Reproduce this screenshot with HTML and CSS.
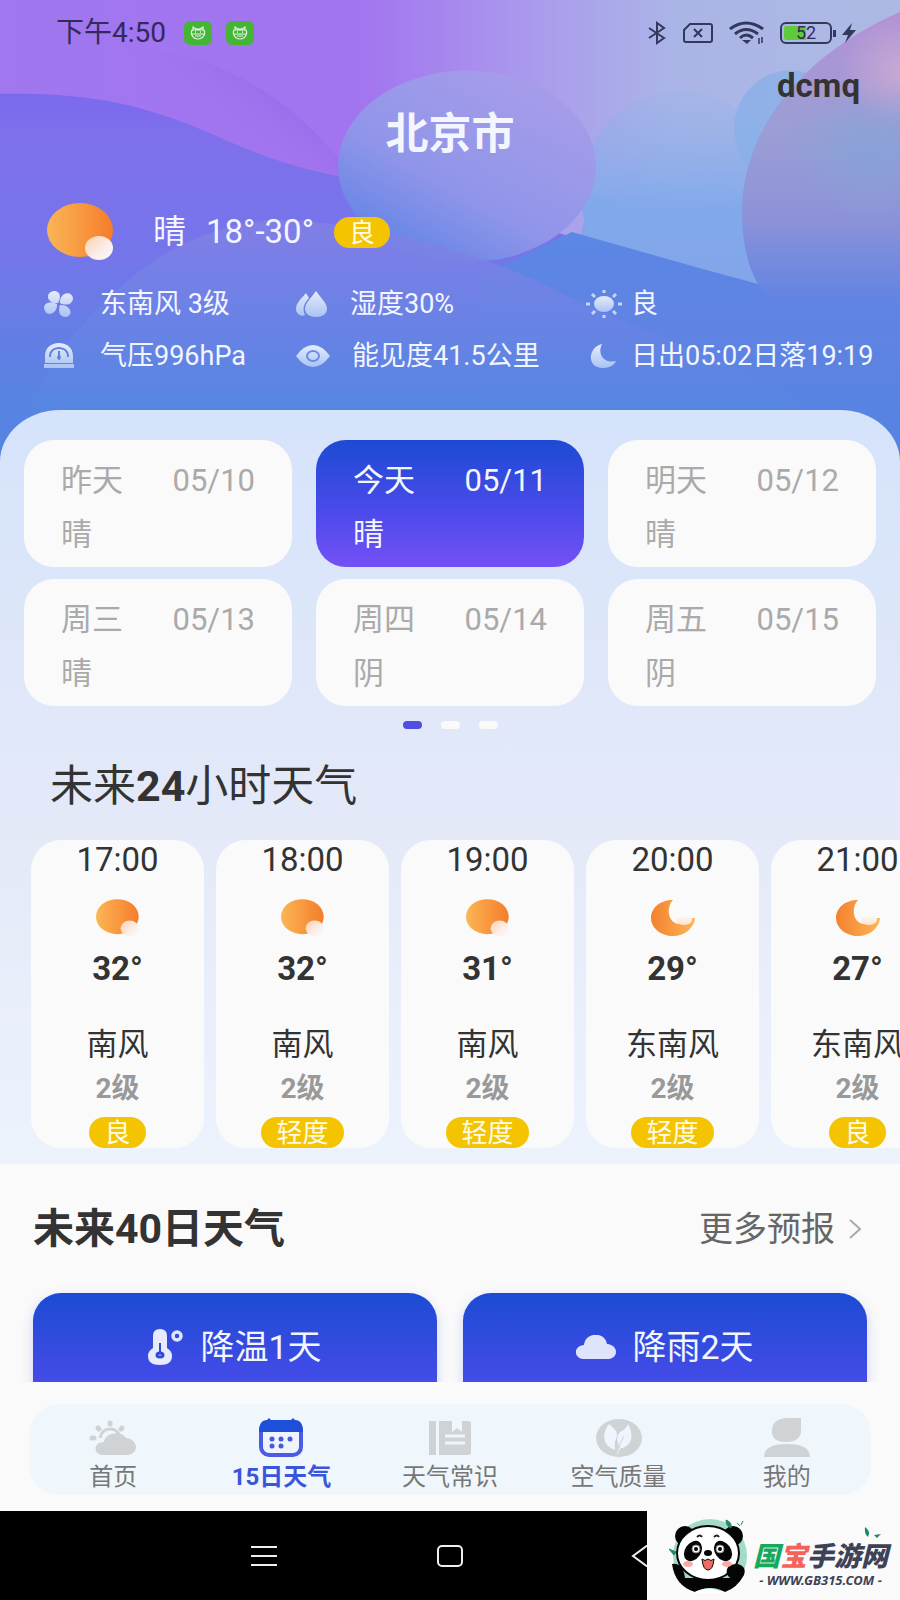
FILE: index.html
```html
<!DOCTYPE html>
<html lang="zh">
<head>
    <meta charset="UTF-8">
    <meta name="viewport" content="width=device-width, initial-scale=1.0">
    <title>15日天气</title>
    <link rel="stylesheet" href="styles.css">
</head>
<body>
    <!-- 公共图标 -->
    <svg class="defs" aria-hidden="true">
        <defs>
            <linearGradient id="gSun" x1="0" y1="0" x2="1" y2="0">
                <stop offset="0" stop-color="#fbb655"/>
                <stop offset="1" stop-color="#f57c2b"/>
            </linearGradient>
            <linearGradient id="gMoon" x1="0" y1="0" x2="1" y2="0">
                <stop offset="0" stop-color="#f5812f"/>
                <stop offset="1" stop-color="#fbb655"/>
            </linearGradient>
            <linearGradient id="gBall" x1="0" y1="0" x2="1" y2="1">
                <stop offset="0" stop-color="#fdcfae"/>
                <stop offset="0.6" stop-color="#fbeeea"/>
                <stop offset="1" stop-color="#fafafa"/>
            </linearGradient>
            <linearGradient id="gHaze" x1="0" y1="0" x2="0" y2="1">
                <stop offset="0" stop-color="#fafafa"/>
                <stop offset="1" stop-color="#fde3cd"/>
            </linearGradient>
            <linearGradient id="gIcon" x1="0" y1="0" x2="0" y2="1">
                <stop offset="0" stop-color="#e6ecfd"/>
                <stop offset="1" stop-color="#a9c3f3"/>
            </linearGradient>
        </defs>
        <symbol id="sun" viewBox="0 0 68 58">
            <ellipse cx="33" cy="27" rx="33" ry="27" fill="url(#gSun)"/>
            <ellipse cx="52" cy="45" rx="14" ry="12" fill="url(#gBall)"/>
        </symbol>
        <symbol id="moon" viewBox="0 0 44 38">
            <path d="M22 1C9 1 0 9 0 19c0 10 10 18 22 18 12 0 21-8 22-18-4 0-5 1-6 3-3 4-9 4-14 2-8-4-8-17-2-23z" fill="url(#gMoon)"/>
            <ellipse cx="33" cy="21" rx="8" ry="5" fill="url(#gHaze)"/>
        </symbol>
        <symbol id="cat" viewBox="0 0 28 24">
            <rect width="28" height="24" rx="6" fill="#45b535"/>
            <g fill="none" stroke="#eaf7e6" stroke-width="1.1">
                <path d="M9 9V6l3 2h4l3-2v3M8 9h12c2 4-1 9-6 9s-8-5-6-9zM8 13h12M11 15h6"/>
                <path d="M11 11h1M16 11h1" stroke-width="1.6"/>
            </g>
        </symbol>
    </svg>

    <div class="app">
        <main class="content">
            <header class="hero">
                <svg class="hero-art" viewBox="0 0 900 470" preserveAspectRatio="none" aria-hidden="true">
                    <defs>
                        <linearGradient id="sky" x1="0" y1="0" x2="1" y2="0">
                            <stop offset="0" stop-color="#a077ef"/>
                            <stop offset="0.4" stop-color="#a374ef"/>
                            <stop offset="0.6" stop-color="#aa9cec"/>
                            <stop offset="0.75" stop-color="#aab5e7"/>
                            <stop offset="1" stop-color="#adb9e4"/>
                        </linearGradient>
                        <linearGradient id="wave1" gradientUnits="userSpaceOnUse" x1="290" y1="85" x2="240" y2="150">
                            <stop offset="0" stop-color="#8c61e6"/>
                            <stop offset="0.6" stop-color="#a070ea" stop-opacity="0.5"/>
                            <stop offset="1" stop-color="#a076ea" stop-opacity="0"/>
                        </linearGradient>
                        <linearGradient id="wave2" gradientUnits="userSpaceOnUse" x1="0" y1="90" x2="0" y2="400">
                            <stop offset="0" stop-color="#7a69ee"/>
                            <stop offset="0.15" stop-color="#7f70ec"/>
                            <stop offset="0.5" stop-color="#7575ea"/>
                            <stop offset="1" stop-color="#5784e2"/>
                        </linearGradient>
                        <linearGradient id="dune1" gradientUnits="userSpaceOnUse" x1="0" y1="215" x2="0" y2="400">
                            <stop offset="0" stop-color="#8580e6"/>
                            <stop offset="0.5" stop-color="#6d83e5"/>
                            <stop offset="1" stop-color="#5786e2"/>
                        </linearGradient>
                        <linearGradient id="dune2" gradientUnits="userSpaceOnUse" x1="0" y1="230" x2="0" y2="410">
                            <stop offset="0" stop-color="#5b87e5"/>
                            <stop offset="0.5" stop-color="#6083e2"/>
                            <stop offset="1" stop-color="#5784e2"/>
                        </linearGradient>
                        <linearGradient id="ballMid" x1="0.9" y1="0.2" x2="0.3" y2="1">
                            <stop offset="0" stop-color="#a59ce9"/>
                            <stop offset="0.6" stop-color="#9095ea"/>
                            <stop offset="1" stop-color="#6485e5"/>
                        </linearGradient>
                        <linearGradient id="ballBlue" x1="0" y1="0" x2="0" y2="1">
                            <stop offset="0" stop-color="#93b2e9" stop-opacity="0.2"/>
                            <stop offset="0.6" stop-color="#80a9eb"/>
                            <stop offset="1" stop-color="#84a5e9"/>
                        </linearGradient>
                        <linearGradient id="ballRight" gradientUnits="userSpaceOnUse" x1="0" y1="5" x2="0" y2="300">
                            <stop offset="0" stop-color="#b48fd6"/>
                            <stop offset="0.4" stop-color="#9c9ed4"/>
                            <stop offset="0.7" stop-color="#8e93d8"/>
                            <stop offset="1" stop-color="#6083e2"/>
                        </linearGradient>
                        <radialGradient id="glow">
                            <stop offset="0" stop-color="#c8a8d4"/>
                            <stop offset="1" stop-color="#c8a8d4" stop-opacity="0"/>
                        </radialGradient>
                        <radialGradient id="glowBlue">
                            <stop offset="0" stop-color="#84a3d8" stop-opacity="0.8"/>
                            <stop offset="1" stop-color="#84a3d8" stop-opacity="0"/>
                        </radialGradient>
                    </defs>
                    <rect width="900" height="470" fill="url(#sky)"/>
                    <path d="M140 48C220 55 290 95 345 165L345 190L0 190L0 60z" fill="url(#wave1)" opacity="0.6"/>
                    <path d="M0 93C70 92 130 98 200 128S300 172 420 188L620 250L620 470H0z" fill="url(#wave2)"/>
                    <path d="M590 190L900 300V330H560z" fill="#84a5e9"/>
                    <ellipse cx="680" cy="190" rx="100" ry="100" fill="url(#ballBlue)"/>
                    <ellipse cx="790" cy="128" rx="56" ry="58" fill="#88b0e8" opacity="0.8"/>
                    <ellipse cx="467" cy="165" rx="129" ry="95" fill="url(#ballMid)"/>
                    <path d="M480 275L572 230L700 266L760 282L900 300V470H480z" fill="url(#dune2)"/>
                    <path d="M900 12C800 55 742 130 742 210C742 250 752 280 772 300H900z" fill="url(#ballRight)"/>
                    <ellipse cx="900" cy="70" rx="60" ry="56" fill="url(#glow)"/>
                    <ellipse cx="870" cy="150" rx="85" ry="65" fill="url(#glowBlue)"/>
                    <path d="M0 470C60 300 180 215 290 218C380 225 470 245 560 290S720 350 800 400V470z" fill="url(#dune1)" opacity="0.8"/>
                </svg>

                <div class="status">
                    <span class="clock">下午4:50</span>
                    <svg width="28" height="24"><use href="#cat"/></svg>
                    <svg width="28" height="24"><use href="#cat"/></svg>
                    <div class="status-right">
                        <svg width="20" height="24" viewBox="0 0 20 24" fill="none" stroke="#33395a" stroke-width="2">
                            <path d="M2 7l15 10-7 5V2l7 5L2 17"/>
                        </svg>
                        <svg width="32" height="22" viewBox="0 0 32 22" fill="none" stroke="#33395a" stroke-width="2">
                            <path d="M8 2h20q2 0 2 2v14q0 2-2 2H4q-2 0-2-2V8zM12 7l8 8M20 7l-8 8"/>
                        </svg>
                        <svg width="36" height="24" viewBox="0 0 36 24" fill="none" stroke="#33395a" stroke-width="3">
                            <path d="M1 8q16-12 33 0M6 13q11-9 23 0M11 17q6-6 13 0"/>
                            <path d="M13 19h9l-4 4z" fill="#33395a" stroke="none"/>
                            <path d="M30 17v6M33 16v6" stroke-width="1.5"/>
                        </svg>
                        <div class="power">
                            <span class="battery">52</span>
                            <svg width="14" height="20" viewBox="0 0 14 20"><path d="M10 0L0 12h6l-3 8L14 7H8z" fill="#33395a"/></svg>
                        </div>
                    </div>
                </div>

                <div class="user">dcmq</div>
                <h1 class="city">北京市</h1>

                <div class="now">
                    <svg class="now-icon" width="68" height="58"><use href="#sun"/></svg>
                    <span>晴</span>
                    <span class="range">18°-30°</span>
                    <span class="badge">良</span>
                </div>

                <ul class="facts">
                    <li>
                        <svg width="30" height="26" viewBox="0 0 30 26" fill="url(#gIcon)">
                            <path d="M14 12C2 13 1 1 10 0c7 0 7 7 4 12zM16 12C15 1 28-1 29 7c0 7-8 8-13 5zM13 13C3 9-2 14 1 20c3 6 13 2 12-7zM16 14c11-1 14 11 6 12-7 0-8-6-6-12z"/>
                        </svg>
                        <span>东南风 3级</span>
                    </li>
                    <li>
                        <svg width="32" height="26" viewBox="0 0 32 26" fill="url(#gIcon)">
                            <path d="M10 2C5 8 0 12 0 18c0 5 5 8 9 6-3-6-1-12 4-17zM20 0c5 7 11 12 11 18 0 5-5 8-11 8S9 23 9 18C9 12 15 7 20 0z"/>
                        </svg>
                        <span>湿度30%</span>
                    </li>
                    <li>
                        <svg width="36" height="28" viewBox="0 0 36 28">
                            <ellipse cx="18" cy="14" rx="10" ry="8" fill="url(#gIcon)"/>
                            <path d="M18 0v3M18 25v3M0 14h4M32 14h4M6 4l3 3M27 7l3-3M6 24l3-3M27 21l3 3" stroke="#c6d6f9" stroke-width="3"/>
                        </svg>
                        <span>良</span>
                    </li>
                    <li>
                        <svg width="30" height="26" viewBox="0 0 30 26">
                            <path d="M1 20V13C1 5 7 0 15 0s14 5 14 13v7zM0 21h30v4H0z" fill="url(#gIcon)"/>
                            <path d="M6 14C6 8 10 5 15 5s9 3 9 9" fill="none" stroke="#5c81dd" stroke-width="2"/>
                            <path d="M14 8h2v4q2 4-1 5-3-1-1-5z" fill="#5c81dd"/>
                        </svg>
                        <span>气压996hPa</span>
                    </li>
                    <li>
                        <svg width="34" height="22" viewBox="0 0 34 22">
                            <path d="M0 11Q8 0 17 0t17 11q-8 11-17 11T0 11z" fill="url(#gIcon)"/>
                            <ellipse cx="17" cy="11" rx="6" ry="5" fill="none" stroke="#6a8ce3" stroke-width="2"/>
                        </svg>
                        <span>能见度41.5公里</span>
                    </li>
                    <li>
                        <svg width="36" height="24" viewBox="0 0 36 24">
                            <path d="M16 0C2 3 0 24 17 24c7 0 11-3 13-7C18 20 11 10 16 0z" fill="url(#gIcon)"/>
                        </svg>
                        <span>日出05:02日落19:19</span>
                    </li>
                </ul>
            </header>

            <section class="sheet">
                <div class="days">
                    <button class="day"><span>昨天</span><span>05/10</span><span>晴</span></button>
                    <button class="day active"><span>今天</span><span>05/11</span><span>晴</span></button>
                    <button class="day"><span>明天</span><span>05/12</span><span>晴</span></button>
                    <button class="day"><span>周三</span><span>05/13</span><span>晴</span></button>
                    <button class="day"><span>周四</span><span>05/14</span><span>阴</span></button>
                    <button class="day"><span>周五</span><span>05/15</span><span>阴</span></button>
                </div>
                <div class="dots"><i class="on"></i><i></i><i></i></div>

                <h2 class="hours-title">未来<b>24</b>小时天气</h2>
                <ul class="hours">
                    <li class="hour">
                        <time>17:00</time>
                        <svg width="44" height="38"><use href="#sun"/></svg>
                        <b>32°</b>
                        <span class="wind">南风</span>
                        <span class="level">2级</span>
                        <span class="badge">良</span>
                    </li>
                    <li class="hour">
                        <time>18:00</time>
                        <svg width="44" height="38"><use href="#sun"/></svg>
                        <b>32°</b>
                        <span class="wind">南风</span>
                        <span class="level">2级</span>
                        <span class="badge">轻度</span>
                    </li>
                    <li class="hour">
                        <time>19:00</time>
                        <svg width="44" height="38"><use href="#sun"/></svg>
                        <b>31°</b>
                        <span class="wind">南风</span>
                        <span class="level">2级</span>
                        <span class="badge">轻度</span>
                    </li>
                    <li class="hour">
                        <time>20:00</time>
                        <svg width="44" height="38"><use href="#moon"/></svg>
                        <b>29°</b>
                        <span class="wind">东南风</span>
                        <span class="level">2级</span>
                        <span class="badge">轻度</span>
                    </li>
                    <li class="hour">
                        <time>21:00</time>
                        <svg width="44" height="38"><use href="#moon"/></svg>
                        <b>27°</b>
                        <span class="wind">东南风</span>
                        <span class="level">2级</span>
                        <span class="badge">良</span>
                    </li>
                </ul>
            </section>

            <section class="long">
                <div class="long-head">
                    <h2>未来40日天气</h2>
                    <a href="#more">更多预报
                        <svg width="12" height="20" viewBox="0 0 12 20" fill="none" stroke="#aaa" stroke-width="2"><path d="M1 1l10 9-10 9"/></svg>
                    </a>
                </div>
                <div class="long-cards">
                    <button class="trend">
                        <svg width="36" height="38" viewBox="0 0 36 38">
                            <path d="M5 8q0-7 7-7t7 7v12q5 3 5 8 0 9-12 9T0 28q0-5 5-8z" fill="#e8ebfe"/>
                            <path d="M12 15v10" stroke="#3049dc" stroke-width="2"/>
                            <ellipse cx="12" cy="27" rx="3" ry="2" fill="none" stroke="#3049dc" stroke-width="3"/>
                            <ellipse cx="29" cy="8" rx="4" ry="4" fill="none" stroke="#dfe5fe" stroke-width="3.5"/>
                        </svg>
                        <span>降温1天</span>
                    </button>
                    <button class="trend">
                        <svg width="40" height="24" viewBox="0 0 40 24">
                            <path d="M9 24C-3 24-3 11 8 10 9-3 29-4 31 9c12 1 12 15 0 15z" fill="#dfe4fd"/>
                        </svg>
                        <span>降雨2天</span>
                    </button>
                </div>
            </section>
        </main>

        <nav class="tabs">
            <div class="tabs-inner">
                <a href="#home">
                    <svg width="48" height="40" viewBox="0 0 48 40" fill="#cfd3d6">
                        <path d="M14 37C4 37 4 24 15 24c1-9 17-12 22-4 13 1 13 17 1 17z"/>
                        <path d="M11 20q2-9 10-9 6 0 9 5" fill="none" stroke="#cfd3d6" stroke-width="3"/>
                        <path d="M21 5v1M9 10l1 1M33 10l-1 1M3 20h2" stroke="#cfd3d6" stroke-width="5" stroke-linecap="round"/>
                    </svg>
                    <span>首页</span>
                </a>
                <a href="#days" class="current">
                    <svg width="48" height="40" viewBox="0 0 48 40">
                        <rect x="3" y="4" width="40" height="33" rx="8" fill="#eef3fe" stroke="#4c5be4" stroke-width="4"/>
                        <path d="M1 14q0-12 8-12l2-2 2 2h20l2-2 2 2q8 0 8 12z" fill="#1f4fd8"/>
                        <g fill="#4658e0">
                            <circle cx="14" cy="21" r="2.5"/><circle cx="23" cy="21" r="2.5"/><circle cx="32" cy="21" r="2.5"/>
                            <circle cx="14" cy="28" r="2.5"/><circle cx="23" cy="28" r="2.5"/>
                        </g>
                    </svg>
                    <span>15日天气</span>
                </a>
                <a href="#tips">
                    <svg width="48" height="40" viewBox="0 0 48 40">
                        <path d="M3 3h7v34H3zM13 3h13v11l5-4 5 4V3h6q3 0 3 3v28q0 3-3 3H13z" fill="#cfd3d6"/>
                        <path d="M19 18h20M19 25h20" stroke="#eef5fc" stroke-width="3"/>
                    </svg>
                    <span>天气常识</span>
                </a>
                <a href="#air">
                    <svg width="48" height="40" viewBox="0 0 48 40">
                        <ellipse cx="25" cy="20" rx="23" ry="19" fill="#cfd3d6"/>
                        <path d="M15 6q9 7 8 12-3 6-2 14-11-4-11-14 1-7 5-12zM34 6q6 11 2 18-4 6-9 6l-4 7q0-5 2-9-4-9 1-14 6-3 8-8z" fill="#eef5fc"/>
                        <path d="M24 34q1-8 6-16" fill="none" stroke="#cfd3d6"/>
                    </svg>
                    <span>空气质量</span>
                </a>
                <a href="#me">
                    <svg width="48" height="40" viewBox="0 0 48 40" fill="#cfd3d6">
                        <path d="M25 0h13v12q0 12-15 12T9 12Q10 0 25 0zM1 39q0-13 23-13t23 13z"/>
                    </svg>
                    <span>我的</span>
                </a>
            </div>
        </nav>

        <footer class="sysnav">
            <button aria-label="菜单"><svg width="26" height="22" viewBox="0 0 26 22" stroke="#eee" stroke-width="2"><path d="M0 2h26M0 11h26M0 20h26"/></svg></button>
            <button aria-label="主页"><svg width="26" height="22" viewBox="0 0 26 22" fill="none" stroke="#eee" stroke-width="2"><rect x="1" y="1" width="24" height="20" rx="4"/></svg></button>
            <button aria-label="返回"><svg width="26" height="22" viewBox="0 0 26 22" fill="none" stroke="#eee" stroke-width="2"><path d="M25 0L10 11l15 11"/></svg></button>

            <div class="brand">
                <svg width="80" height="76" viewBox="0 0 80 76" aria-hidden="true">
                    <circle cx="41" cy="38" r="37" fill="#a3dbc6"/>
                    <g fill="#050505">
                        <circle cx="16" cy="18" r="10"/><circle cx="64" cy="18" r="10"/>
                        <path d="M3 46Q14 44 16 60h46q-4-12 6-14 10 2 7 11Q68 70 56 74q-14-8-30 0Q6 68 3 46z"/>
                    </g>
                    <path d="M24 75q15-9 32 0z" fill="#fff"/>
                    <ellipse cx="39" cy="35" rx="31" ry="27" fill="#fff" stroke="#050505" stroke-width="2"/>
                    <g fill="#050505">
                        <ellipse cx="24" cy="33" rx="8" ry="11" transform="rotate(35 24 33)"/>
                        <ellipse cx="54" cy="33" rx="8" ry="11" transform="rotate(-35 54 33)"/>
                        <ellipse cx="39" cy="35" rx="4" ry="3"/>
                        <path d="M68 46q-12 0-10 10 3 7 12 4z"/>
                    </g>
                    <g fill="#fff" stroke="#888"><circle cx="27" cy="31" r="4"/><circle cx="51" cy="31" r="4"/></g>
                    <circle cx="27" cy="31" r="2"/><circle cx="51" cy="31" r="2"/>
                    <path d="M33 41q3 3 6 0 3 3 6 0-1 11-6 11t-6-11z" fill="#f06a63" stroke="#050505"/>
                    <ellipse cx="19" cy="46" rx="5" ry="3" fill="#fba9a0"/><ellipse cx="58" cy="46" rx="5" ry="3" fill="#fba9a0"/>
                    <path d="M28 19q3-3 5 0M45 19q3-3 5 0" fill="none" stroke="#222" stroke-width="2"/>
                    <path d="M57 2q6 2 5 8-5-2-5-8zM68 5l3 3M74 3l-2 4M0 31l7 3-2 3z" fill="#1d8a63" stroke="#1d8a63"/>
                </svg>
                <div class="brand-text">
                    <div class="brand-name"><em class="green">国</em><em class="red">宝</em><em>手游网</em></div>
                    <div class="brand-url">- WWW.GB315.COM -</div>
                </div>
                <svg class="leaf" width="18" height="12" viewBox="0 0 18 12" aria-hidden="true"><path d="M1 0q6 4 3 10Q0 7 1 0zM10 8l3 3 4-4" fill="#1d8a63"/></svg>
            </div>
        </footer>
    </div>
</body>
</html>
```
FILE: styles.css
```css
* {
    box-sizing: border-box;
}
body {
    margin: 0;
    background: #fafafa;
    color: #333;
    font-family: Roboto, "Noto Sans CJK SC", sans-serif;
}
h1, h2, ul {
    margin: 0;
    padding: 0;
    list-style: none;
}
button {
    border: none;
    padding: 0;
    background: none;
    font-family: inherit;
    cursor: pointer;
}
a {
    color: inherit;
    text-decoration: none;
}
svg {
    flex-shrink: 0;
    display: block;
}
.defs {
    position: absolute;
    width: 0;
    height: 0;
}
.app {
    display: flex;
    flex-direction: column;
    height: 100vh;
}
.content {
    flex: 1;
    min-height: 0;
    overflow: hidden;
}

/* 顶部实况 */
.hero {
    position: relative;
    isolation: isolate;
    padding-bottom: 92px;
    color: #f3f5ff;
}
.hero-art {
    position: absolute;
    z-index: -1;
    top: 0;
    left: 0;
    width: 100%;
    height: 100%;
}
.status {
    display: flex;
    align-items: center;
    gap: 14px;
    height: 66px;
    padding: 0 44px 0 56px;
    color: #33295a;
}
.clock {
    margin-right: 4px;
    font-size: 28px;
    line-height: 32px;
}
.status-right {
    display: flex;
    align-items: center;
    gap: 15px;
    margin-left: auto;
}
.power {
    display: flex;
    align-items: center;
    gap: 10px;
}
.battery {
    position: relative;
    width: 52px;
    height: 22px;
    border: 2px solid #33395a;
    border-radius: 6px;
    background: linear-gradient(90deg, #5fcb3c 50%, transparent 50%) content-box;
    padding: 2px;
    font-size: 18px;
    line-height: 14px;
    text-align: center;
}
.battery::after {
    content: "";
    position: absolute;
    right: -6px;
    top: 6px;
    width: 3px;
    height: 7px;
    background: #33395a;
}
.user {
    padding-right: 40px;
    color: #333;
    font-size: 33px;
    font-weight: 700;
    line-height: 40px;
    text-align: right;
}
.city {
    padding-top: 4px;
    font-size: 43px;
    line-height: 48px;
    text-align: center;
}
.now {
    display: flex;
    align-items: center;
    height: 60px;
    margin-top: 44px;
    padding-left: 47px;
    font-size: 33px;
    line-height: 40px;
}
.now-icon {
    margin-right: 38px;
}
.range {
    margin: 0 20px;
}
.badge {
    height: 31px;
    padding: 0 15px;
    border-radius: 16px;
    background: #f5c400;
    color: #fdfbe8;
    font-size: 26px;
    line-height: 32px;
}
.facts {
    display: grid;
    grid-template-columns: 252px 290px 1fr;
    padding: 16px 0 0 44px;
    font-size: 27px;
    line-height: 52px;
}
.facts li {
    display: flex;
    align-items: center;
    white-space: nowrap;
}
.facts svg {
    margin-right: 22px;
}
.facts li:nth-child(3n+1) svg {
    margin-right: 26px;
}
.facts li:nth-child(3n) svg {
    margin-right: 9px;
}

/* 日期卡片 */
.sheet {
    position: relative;
    margin-top: -64px;
    padding: 30px 0 16px;
    border-radius: 60px 60px 0 0 / 52px 52px 0 0;
    background: linear-gradient(#d5e3fb, #e0e8f9 40%, #e4e9f8 55%, #edf3fd);
}
.days {
    display: grid;
    grid-template-columns: repeat(3, 1fr);
    gap: 12px 24px;
    padding: 0 24px;
}
.day {
    display: grid;
    grid-template-columns: auto auto;
    justify-content: space-between;
    height: 127px;
    padding: 14px 37px 6px;
    border-radius: 30px;
    background: #fafafa;
    color: #aaa;
    font-size: 31px;
    line-height: 53px;
    text-align: left;
}
.day.active {
    background: linear-gradient(#1c4bd3, #4a4aea 55%, #7450f6);
    color: #f3f5ff;
}
.dots {
    display: flex;
    justify-content: center;
    gap: 19px;
    padding: 15px 0;
}
.dots i {
    width: 19px;
    height: 8px;
    border-radius: 4px;
    background: #fafafa;
}
.dots .on {
    background: #534ee2;
}

/* 24小时 */
.hours-title {
    padding: 12px 50px 24px;
    font-size: 43px;
    font-weight: 400;
    line-height: 60px;
}
.hours {
    display: flex;
    gap: 12px;
    padding-left: 31px;
    overflow: hidden;
}
.hour {
    display: flex;
    flex-direction: column;
    align-items: center;
    flex: 0 0 173px;
    height: 308px;
    border-radius: 30px;
    background: #fafafa;
    font-size: 33px;
    line-height: 44px;
}
.hour time {
    line-height: 40px;
}
.hour svg {
    margin: 19px 0 10px;
}
.hour .wind {
    margin-top: 32px;
    font-size: 31px;
}
.hour .level {
    color: #999;
    font-size: 28px;
    font-weight: 700;
}
.hour .badge {
    margin-top: 6px;
}

/* 40日 */
.long {
    padding: 41px 33px 0;
}
.long-head {
    display: flex;
    justify-content: space-between;
    align-items: center;
    padding-right: 6px;
    line-height: 48px;
}
.long-head h2 {
    font-size: 41px;
}
.long-head a {
    display: flex;
    align-items: center;
    gap: 14px;
    color: #666;
    font-size: 34px;
}
.long-cards {
    display: grid;
    grid-template-columns: 1fr 1fr;
    gap: 26px;
    margin-top: 40px;
}
.trend {
    display: flex;
    justify-content: center;
    align-items: center;
    gap: 16px;
    height: 127px;
    padding-bottom: 20px;
    border-radius: 28px;
    background: linear-gradient(#1c4bd3, #454be8 70%, #7450f6);
    box-shadow: 0 4px 12px rgba(80, 100, 240, 0.25);
    color: #f3f5ff;
    font-size: 34px;
    line-height: 40px;
}

/* 底部导航 */
.tabs {
    position: relative;
    padding: 22px 29px 16px;
    background: #fafafa;
}
.tabs-inner {
    display: grid;
    grid-template-columns: repeat(5, 1fr);
    height: 91px;
    padding-top: 14px;
    border-radius: 30px;
    background: #eff6fc;
    color: #777;
    font-size: 24px;
    line-height: 38px;
}
.tabs-inner a {
    display: flex;
    flex-direction: column;
    align-items: center;
}
.tabs-inner .current {
    color: #3a55dc;
    font-weight: 700;
}
.sysnav {
    position: relative;
    display: flex;
    justify-content: center;
    align-items: center;
    gap: 160px;
    height: 89px;
    background: #000;
}
.brand {
    position: absolute;
    top: 0;
    right: 0;
    bottom: 0;
    display: flex;
    align-items: center;
    gap: 4px;
    width: 253px;
    padding-left: 22px;
    background: #fafafa;
}
.brand-text {
    padding-top: 21px;
    color: #3d4257;
    font-weight: 700;
    text-align: center;
    white-space: nowrap;
}
.brand-name {
    font-size: 27px;
    font-weight: 900;
    line-height: 28px;
}
.brand-name .green {
    color: #17a95b;
}
.brand-name .red {
    color: #f4625a;
}
.brand-url {
    font-family: "Noto Sans", sans-serif;
    font-size: 13px;
    font-style: italic;
    line-height: 18px;
}
.leaf {
    position: absolute;
    top: 16px;
    right: 18px;
}
```
